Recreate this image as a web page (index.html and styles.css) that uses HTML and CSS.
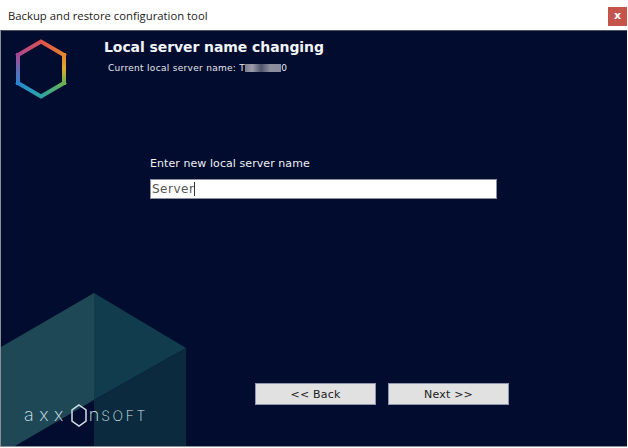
FILE: index.html
```html
<!DOCTYPE html>
<html lang="en">
<head>
<meta charset="utf-8">
<title>Backup and restore configuration tool</title>
<link rel="stylesheet" href="styles.css">
</head>
<body>
<div class="window">
  <header class="titlebar">
    <span class="title">Backup and restore configuration tool</span>
    <button class="close" type="button">x</button>
  </header>
  <main class="panel">
    <svg class="decor" width="186" height="153" viewBox="0 0 186 153">
      <polygon points="0,54 93,0 93,107 14,153 0,153" fill="#1f4857"/>
      <polygon points="93,0 185,55 93,107" fill="#113c4d"/>
      <polygon points="93,107 185,55 185,153 93,153" fill="#0b2a3e"/>
    </svg>
    <div class="brand">
      <span class="brand-low">axx</span>
      <svg class="brand-hex" width="16" height="23" viewBox="0 0 16 23">
        <polygon points="8,1 15,5.8 15,17.2 8,22 1,17.2 1,5.8" fill="none" stroke="#cfe0e6" stroke-width="1.5"/>
      </svg>
      <span class="brand-n">n</span>
      <span class="brand-caps">SOFT</span>
    </div>
    <section class="head">
      <svg class="logo" width="52" height="60" viewBox="0 0 52 60">
        <defs>
          <linearGradient id="g1" gradientUnits="userSpaceOnUse" x1="3" y1="16" x2="49" y2="16">
            <stop offset="0" stop-color="#a84a92"/>
            <stop offset="0.5" stop-color="#df4f4f"/>
            <stop offset="1" stop-color="#e6842f"/>
          </linearGradient>
          <linearGradient id="g2" gradientUnits="userSpaceOnUse" x1="49" y1="16" x2="49" y2="44">
            <stop offset="0" stop-color="#e6842f"/>
            <stop offset="0.5" stop-color="#d9ad2f"/>
            <stop offset="1" stop-color="#6bb04f"/>
          </linearGradient>
          <linearGradient id="g3" gradientUnits="userSpaceOnUse" x1="49" y1="44" x2="3" y2="44">
            <stop offset="0" stop-color="#6bb04f"/>
            <stop offset="0.5" stop-color="#2aa6a6"/>
            <stop offset="1" stop-color="#2a86d0"/>
          </linearGradient>
          <linearGradient id="g4" gradientUnits="userSpaceOnUse" x1="3" y1="44" x2="3" y2="16">
            <stop offset="0" stop-color="#2a86d0"/>
            <stop offset="1" stop-color="#a84a92"/>
          </linearGradient>
        </defs>
        <g fill="none" stroke-width="4" stroke-linecap="square">
          <path d="M3 16 L26 2.5 L49 16" stroke="url(#g1)"/>
          <path d="M49 16 L49 44" stroke="url(#g2)"/>
          <path d="M49 44 L26 57.5 L3 44" stroke="url(#g3)"/>
          <path d="M3 44 L3 16" stroke="url(#g4)"/>
        </g>
      </svg>
      <div class="head-text">
        <h1 class="heading">Local server name changing</h1>
        <p class="current">Current local server name: T<span class="blur"></span>0</p>
      </div>
    </section>
    <section class="form">
      <label class="field-label" for="name">Enter new local server name</label>
      <div class="input" id="name"><span class="value">Server</span><span class="caret"></span></div>
    </section>
    <footer class="actions">
      <button class="btn" type="button">&lt;&lt; Back</button>
      <button class="btn" type="button">Next &gt;&gt;</button>
    </footer>
  </main>
</div>
</body>
</html>
```
FILE: styles.css
```css
* { box-sizing: border-box; }
html, body { margin: 0; height: 100%; background: #fff; }
.window {
  width: 628px;
  height: 448px;
  display: flex;
  flex-direction: column;
  padding-bottom: 1px;
}
.titlebar {
  height: 30px;
  flex: none;
  display: flex;
  align-items: center;
  justify-content: space-between;
  padding: 0 1px 0 8px;
  background: #fff;
}
.title {
  font: 11.3px "Open Sans", "Noto Sans", sans-serif;
  color: #1a1a1a;
}
.close {
  width: 19px;
  height: 19px;
  margin-top: 3px;
  padding: 0 0 3px;
  border: 0;
  background: #c4544c;
  color: #fff;
  font: bold 11px "DejaVu Sans", sans-serif;
}
.panel {
  position: relative;
  flex: 1;
  display: flex;
  flex-direction: column;
  margin-right: 1px;
  background: #010c2f;
  border-top: 1px solid #4e5560;
  border-left: 1px solid #8a8f98;
  border-bottom: 1px solid #8a8f98;
  overflow: hidden;
  font-family: "DejaVu Sans", sans-serif;
}
.decor {
  position: absolute;
  left: 0;
  bottom: 0;
}
.brand {
  position: absolute;
  left: 23px;
  bottom: 19px;
  display: flex;
  align-items: center;
  height: 23px;
  color: #d6e6ec;
  font-family: Inter, sans-serif;
  font-weight: 200;
}
.brand-low,
.brand-n {
  font-size: 18px;
  line-height: 23px;
  position: relative;
  top: -1px;
}
.brand-low { letter-spacing: 5.5px; }
.brand-n { letter-spacing: 2px; }
.brand-caps {
  font-size: 14px;
  letter-spacing: 2.6px;
}
.brand-hex { margin: 0 2px 0 2px; }
.head {
  position: relative;
  display: flex;
  padding: 8px 0 0 14px;
}
.logo { flex: none; }
.head-text { margin-left: 37px; }
.heading {
  margin: 0;
  font-size: 14px;
  line-height: 17px;
  font-weight: bold;
  color: #f2f3f6;
  letter-spacing: -0.08px;
}
.current {
  margin: 7px 0 0 4px;
  font-size: 9px;
  line-height: 11px;
  letter-spacing: 0.3px;
  color: #e6e8ee;
}
.blur {
  display: inline-block;
  width: 36px;
  height: 8px;
  vertical-align: -1px;
  background: linear-gradient(90deg, #7a7d90 0, #9a9caa 20%, #50546c 45%, #8d8fa0 70%, #8a8c9e 100%);
}
.form {
  position: relative;
  margin: 58px 0 0 149px;
  width: 347px;
}
.field-label {
  display: block;
  font-size: 11px;
  line-height: 14px;
  letter-spacing: 0.07px;
  color: #eef0f4;
}
.input {
  margin-top: 8px;
  height: 20px;
  display: flex;
  align-items: center;
  padding-left: 1px;
  background: #fff;
  border: 1px solid #8c90a0;
  font-size: 12px;
  letter-spacing: 0.5px;
  color: #555;
}
.caret {
  width: 1px;
  height: 14px;
  background: #333;
}
.actions {
  position: relative;
  margin-top: auto;
  display: flex;
  gap: 12px;
  padding: 0 0 41px 254px;
}
.btn {
  width: 121px;
  height: 22px;
  padding: 0;
  background: #e1e1e1;
  border: 1px solid #8f96ad;
  color: #222;
  font: 11px "DejaVu Sans", sans-serif;
  letter-spacing: 0.2px;
}
```
